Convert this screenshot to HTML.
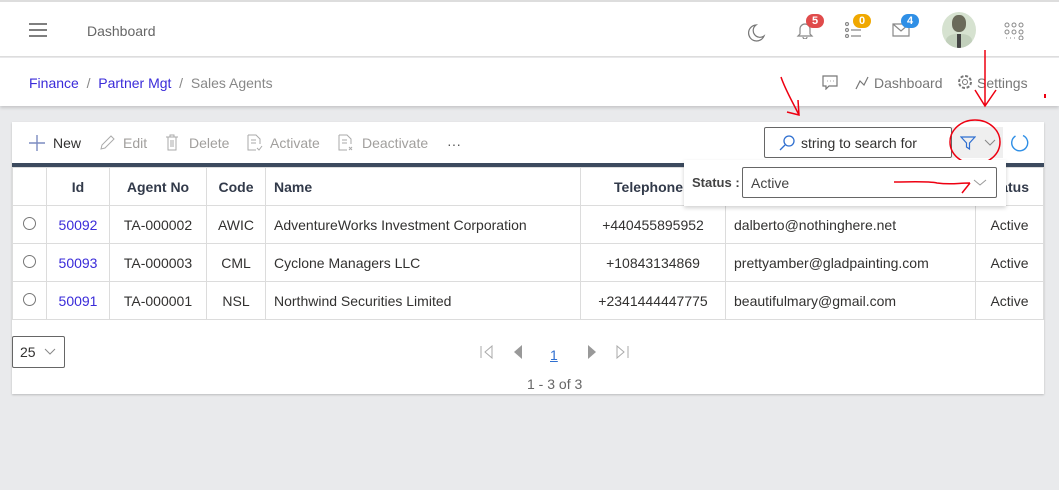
<!DOCTYPE html>
<html><head><meta charset="utf-8"><style>
*{box-sizing:border-box;margin:0;padding:0}
body{width:1059px;height:490px;background:#e9eaec;font-family:"Liberation Sans",sans-serif;font-size:14px;color:#323130;position:relative;overflow:hidden}
.a{position:absolute}
.hdr{left:0;top:0;width:1059px;height:57px;background:#fff;border-top:2px solid #ddd;border-bottom:1px solid #ddd}
.bc{left:0;top:58px;width:1059px;height:48px;background:#fff;box-shadow:0 2px 3px rgba(0,0,0,.15)}
.card{left:12px;top:122px;width:1032px;height:272px;background:#fff;box-shadow:0 1px 2px rgba(0,0,0,.2)}
.tb{color:#a19f9d;font-size:14px}
table{border-collapse:collapse;position:absolute;left:12px;top:167px;width:1032px}
td,th{border:1px solid #dcdcdc;height:38px;font-size:14px}
th{font-weight:bold;color:#323a4a}
td{text-align:center}
.lk{color:#3a2bd9}
.badge{position:absolute;height:14px;min-width:18px;border-radius:7px;color:#fff;font-size:11px;font-weight:bold;text-align:center;line-height:14px}
</style></head><body>
<div class="a hdr"></div>
<svg class="a" style="left:28px;top:22px" width="20" height="16"><path d="M1 2H19M1 8H19M1 14H19" stroke="#555" stroke-width="1.6"/></svg>
<div class="a" style="left:87px;top:23px;color:#666;font-size:14px">Dashboard</div>
<svg class="a" style="left:746px;top:23px" width="20" height="20"><path d="M10 2A8 8 0 1 0 18 13 6 6 0 0 1 10 2Z" fill="none" stroke="#777" stroke-width="1.2"/></svg>
<svg class="a" style="left:796px;top:21px" width="18" height="18"><path d="M4 13V8a5 5 0 0 1 10 0v5l2 2H2Z M7 16a2 2 0 0 0 4 0" fill="none" stroke="#888" stroke-width="1.2"/></svg>
<div class="badge" style="left:806px;top:14px;background:#e04b4b">5</div>
<svg class="a" style="left:845px;top:22px" width="18" height="16"><g fill="none" stroke="#888" stroke-width="1.2"><circle cx="2" cy="2" r="1.5"/><circle cx="2" cy="8" r="1.5"/><circle cx="2" cy="14" r="1.5"/><path d="M6 8H16M6 14H16"/></g></svg>
<div class="badge" style="left:853px;top:14px;background:#f0a800">0</div>
<svg class="a" style="left:892px;top:23px" width="18" height="14"><path d="M1 1H17V13H1Z M1 1L9 8 17 1" fill="none" stroke="#888" stroke-width="1.2"/></svg>
<div class="badge" style="left:901px;top:14px;background:#2f8fe6">4</div>
<div class="a" style="left:942px;top:12px;width:34px;height:36px;border-radius:50%;background:#d6e2d0;overflow:hidden">
<div class="a" style="left:10px;top:3px;width:14px;height:17px;border-radius:45%;background:#6a6a5a"></div>
<div class="a" style="left:4px;top:22px;width:26px;height:16px;border-radius:40% 40% 0 0;background:#c2d0bc"></div>
<div class="a" style="left:15px;top:22px;width:4px;height:14px;background:#444"></div>
</div>
<svg class="a" style="left:1004px;top:22px" width="20" height="18"><g fill="none" stroke="#888" stroke-width="1"><circle cx="3" cy="3" r="2"/><circle cx="10" cy="3" r="2"/><circle cx="17" cy="3" r="2"/><circle cx="3" cy="10" r="2"/><circle cx="10" cy="10" r="2"/><circle cx="17" cy="10" r="2"/><circle cx="17" cy="16" r="2"/></g><path d="M2 16H3M6 16H7M10 16H11" stroke="#888"/></svg>

<div class="a bc"></div>
<div class="a" style="left:29px;top:75px;font-size:14px"><span class="lk">Finance</span> <span style="color:#888">&nbsp;/&nbsp;</span> <span class="lk">Partner Mgt</span> <span style="color:#888">&nbsp;/&nbsp;</span> <span style="color:#888">Sales Agents</span></div>
<svg class="a" style="left:822px;top:75px" width="16" height="15"><path d="M1 1H15V11H7L4 14V11H1Z M5 6H5.5M8 6H8.5M11 6H11.5" fill="none" stroke="#777" stroke-width="1.2"/></svg>
<svg class="a" style="left:854px;top:75px" width="16" height="16"><path d="M2 14L6 6 10 10 14 2" fill="none" stroke="#777" stroke-width="1.2"/></svg>
<div class="a" style="left:874px;top:75px;color:#777">Dashboard</div>
<svg class="a" style="left:957px;top:74px" width="16" height="16"><circle cx="8" cy="8" r="2.5" fill="none" stroke="#777"/><circle cx="8" cy="8" r="6" fill="none" stroke="#777" stroke-dasharray="3 1.7" stroke-width="2"/></svg>
<div class="a" style="left:977px;top:75px;color:#777">Settings</div>

<div class="a card"></div>
<svg class="a" style="left:29px;top:135px" width="16" height="16"><path d="M8 0V16M0 8H16" stroke="#7c8cc0" stroke-width="1.4"/></svg>
<div class="a" style="left:53px;top:135px">New</div>
<svg class="a" style="left:99px;top:134px" width="16" height="17"><path d="M2 15L3 11 12 2 15 5 6 14Z" fill="none" stroke="#aaa"/></svg>
<div class="a tb" style="left:123px;top:135px">Edit</div>
<svg class="a" style="left:165px;top:134px" width="14" height="17"><path d="M1 3H13M3 3V16H11V3M5 3V1H9V3M6 6V13M8 6V13" fill="none" stroke="#aaa"/></svg>
<div class="a tb" style="left:189px;top:135px">Delete</div>
<svg class="a" style="left:247px;top:134px" width="16" height="17"><path d="M1 1H9L13 5V10M1 1V16H9M4 6H9M4 9H9M10 14L12 16 15 12" fill="none" stroke="#aaa"/></svg>
<div class="a tb" style="left:270px;top:135px">Activate</div>
<svg class="a" style="left:338px;top:134px" width="16" height="17"><path d="M1 1H9L13 5V10M1 1V16H9M4 6H9M4 9H9M11 13L14 16M14 13L11 16" fill="none" stroke="#aaa"/></svg>
<div class="a tb" style="left:362px;top:135px">Deactivate</div>
<div class="a" style="left:447px;top:136px;color:#555">···</div>

<div class="a" style="left:764px;top:127px;width:188px;height:31px;border:1px solid #666;border-radius:2px"></div>
<svg class="a" style="left:779px;top:135px" width="16" height="16"><circle cx="10" cy="6" r="5" fill="none" stroke="#2f6fd0" stroke-width="1.3"/><path d="M6 10L1 15" stroke="#2f6fd0" stroke-width="1.3"/></svg>
<div class="a" style="left:801px;top:135px">string to search for</div>
<div class="a" style="left:952px;top:127px;width:51px;height:31px;background:#efefef"></div>
<svg class="a" style="left:960px;top:135px" width="16" height="16"><path d="M1 2H15L9.5 8V14L6.5 12V8Z" fill="none" stroke="#2f6fd0" stroke-width="1.2"/></svg>
<svg class="a" style="left:984px;top:139px" width="12" height="8"><path d="M1 1L6 6 11 1" fill="none" stroke="#888"/></svg>
<svg class="a" style="left:1010px;top:133px" width="20" height="20"><path d="M13 2.5A8 8 0 1 1 5.5 3" fill="none" stroke="#2f8fe6" stroke-width="1.4"/></svg>
<svg class="a" style="left:940px;top:115px" width="70" height="52"><ellipse cx="35" cy="27" rx="25" ry="22" fill="none" stroke="#e01" stroke-width="1.5"/></svg>
<svg class="a" style="left:775px;top:75px" width="50" height="45"><path d="M6 2C10 14 16 24 24 40M12 37L24 40 23 25" fill="none" stroke="#e01" stroke-width="1.5"/></svg>
<svg class="a" style="left:970px;top:48px" width="40" height="62"><path d="M15 2V58M5 42L15 58 26 42" fill="none" stroke="#e01" stroke-width="1.5"/></svg>
<div class="a" style="left:1044px;top:94px;width:2px;height:4px;background:#e01"></div>

<div class="a" style="left:12px;top:163px;width:1032px;height:4px;background:#3c4a5e"></div>
<table>
<tr><th style="width:34px"></th><th style="width:63px">Id</th><th style="width:97px">Agent No</th><th style="width:59px">Code</th><th style="width:315px;text-align:left;padding-left:8px">Name</th><th style="width:145px;text-align:right;padding-right:42px">Telephone</th><th style="width:250px"></th><th style="text-align:right;padding-right:14px">Status</th></tr>
<tr><td><span style="display:inline-block;width:13px;height:13px;border:1px solid #777;border-radius:50%"></span></td><td class="lk">50092</td><td>TA-000002</td><td>AWIC</td><td style="text-align:left;padding-left:8px">AdventureWorks Investment Corporation</td><td>+440455895952</td><td style="text-align:left;padding-left:8px">dalberto@nothinghere.net</td><td>Active</td></tr>
<tr><td><span style="display:inline-block;width:13px;height:13px;border:1px solid #777;border-radius:50%"></span></td><td class="lk">50093</td><td>TA-000003</td><td>CML</td><td style="text-align:left;padding-left:8px">Cyclone Managers LLC</td><td>+10843134869</td><td style="text-align:left;padding-left:8px">prettyamber@gladpainting.com</td><td>Active</td></tr>
<tr><td><span style="display:inline-block;width:13px;height:13px;border:1px solid #777;border-radius:50%"></span></td><td class="lk">50091</td><td>TA-000001</td><td>NSL</td><td style="text-align:left;padding-left:8px">Northwind Securities Limited</td><td>+2341444447775</td><td style="text-align:left;padding-left:8px">beautifulmary@gmail.com</td><td>Active</td></tr>
</table>

<div class="a" style="left:684px;top:160px;width:322px;height:46px;background:#fff;box-shadow:0 2px 4px rgba(0,0,0,.18)"></div>
<div class="a" style="left:692px;top:175px;font-weight:bold;color:#444;font-size:13px">Status :</div>
<div class="a" style="left:742px;top:167px;width:255px;height:31px;border:1px solid #666;border-radius:2px;background:#fff"></div>
<div class="a" style="left:751px;top:175px;color:#444">Active</div>
<svg class="a" style="left:973px;top:179px" width="14" height="8"><path d="M1 1L7 6 13 1" fill="none" stroke="#999"/></svg>
<svg class="a" style="left:892px;top:177px" width="80" height="18"><path d="M2 5C20 5 35 4 45 6 60 8 65 6 78 6M70 16L78 6" fill="none" stroke="#e01" stroke-width="1.5"/></svg>

<div class="a" style="left:12px;top:336px;width:53px;height:32px;border:1px solid #666;border-radius:2px"></div>
<div class="a" style="left:20px;top:344px">25</div>
<svg class="a" style="left:44px;top:348px" width="12" height="8"><path d="M1 1L6 6 11 1" fill="none" stroke="#888"/></svg>
<svg class="a" style="left:480px;top:345px" width="14" height="14"><path d="M1 1V13M12 1L5 7 12 13Z" fill="none" stroke="#aaa"/></svg>
<svg class="a" style="left:512px;top:344px" width="12" height="16"><path d="M10 1L2 8 10 15Z" fill="#999"/></svg>
<div class="a" style="left:550px;top:347px;color:#2f6fd0;text-decoration:underline">1</div>
<svg class="a" style="left:586px;top:344px" width="12" height="16"><path d="M2 1L10 8 2 15Z" fill="#999"/></svg>
<svg class="a" style="left:615px;top:345px" width="14" height="14"><path d="M13 1V13M2 1L9 7 2 13Z" fill="none" stroke="#aaa"/></svg>
<div class="a" style="left:527px;top:376px;color:#666">1 - 3 of 3</div>
</body></html>
